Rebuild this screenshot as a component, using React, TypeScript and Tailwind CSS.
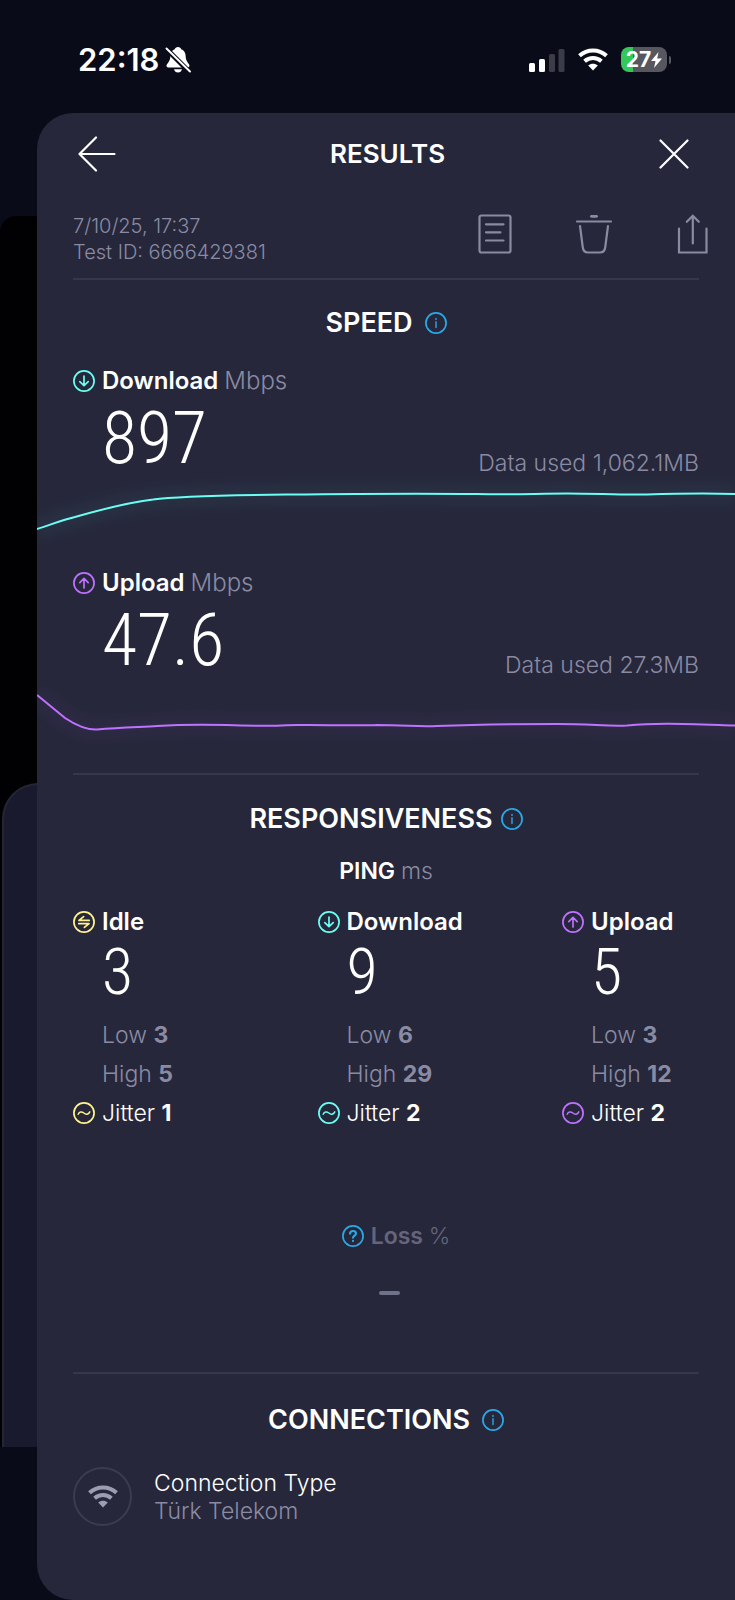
import type { ReactNode } from "react";

const TEAL = "#6afff3";
const PURPLE = "#bf71ff";
const YELLOW = "#fff38e";
const BLUE = "#29a9e6";

type IconKind = "down" | "up" | "idle" | "jitter" | "info" | "question";

const iconPaths: Record<IconKind, ReactNode> = {
    down: <path d="M11 6v9.5M6.8 11.6L11 15.6l4.2-4" strokeWidth="1.7" />,
    up: <path d="M11 16V6.6M6.8 10.6L11 6.4l4.2 4.2" strokeWidth="1.7" />,
    idle: <path d="M16.2 9.4H6L10.6 5.6M5.8 12.7H16L11.4 16.4" strokeWidth="1.7" />,
    jitter: <path d="M5.2 12.2C6.4 9.6 8.6 9.2 10.8 11C13 12.9 15.4 12.6 16.8 9.8" strokeWidth="1.5" />,
    info: <path d="M11 9.8v5.8M11 6.4v1" strokeWidth="1.4" />,
    question: <path d="M8 8.6C8.2 5 14 5.2 14 8.6C14 10.8 11 10.6 11 12.8M11 15.8v.3" strokeWidth="2.100" />,
};

function CircleIcon({ kind, color }: { kind: IconKind; color: string }) {
    return (
        <svg
            viewBox="0 0 22 22"
            className="size-[22px] shrink-0"
            fill="none"
            stroke={color}
            strokeLinecap="round"
            strokeLinejoin="round"
            aria-hidden="true"
        >
            <circle cx="11" cy="11" r="10.1" strokeWidth="1.7" />
            {iconPaths[kind]}
        </svg>
    );
}

function WifiIcon({ className }: { className: string }) {
    return (
        <svg viewBox="0 0 30 23" className={className} fill="none" stroke="currentColor" aria-hidden="true">
            <path d="M1.5 7.8C9.2 .6 20.8 .6 28.5 7.8" strokeWidth="4" />
            <path d="M6.6 13.2C11.5 8.9 18.5 8.9 23.4 13.2" strokeWidth="4" />
            <path d="M10.2 17.6C13 15.2 17 15.2 19.8 17.6L15 22.4Z" fill="currentColor" stroke="none" />
        </svg>
    );
}

function StatusBar() {
    return (
        <div className="flex h-[113px] items-center justify-between pl-[78px] pr-16 pt-1.5 text-white">
            <div className="flex items-center gap-1.5">
                <span className="text-[31px] leading-8 font-semibold">22:18</span>
                <svg viewBox="0 0 26 27" className="h-[27px] w-[26px]" fill="currentColor" aria-hidden="true">
                    <path d="M13 1c1.800 0 2.800 1 3.200 2.200C19.600 4.400 20.600 7.400 20.700 10.500C20.800 14.500 22.500 16 24 18.200C25 20 24.300 21.500 22.500 21.500H3.500C1.700 21.500 .8 20 2 18.200C3.600 16 5.200 14.500 5.300 10.500C5.400 7.400 6.400 4.400 9.800 3.200C10.200 2 11.200 1 13 1Z" />
                    <path d="M9 23.200h8c-.5 2-2 3.300-4 3.300s-3.500-1.300-4-3.300Z" />
                    <path d="M0 1.500L25 26.500" stroke="#090b19" strokeWidth="5" />
                    <path d="M1.500 2.500L25 25.500" stroke="currentColor" strokeWidth="1.900" strokeLinecap="round" />
                </svg>
            </div>
            <div className="flex items-center gap-[13px]">
                <svg viewBox="0 0 36 24" className="h-6 w-9" fill="currentColor" aria-hidden="true">
                    <rect x="0" y="15" width="6" height="9" rx="1.500" />
                    <rect x="10" y="11" width="6" height="13" rx="1.500" />
                    <rect x="20" y="6" width="6" height="18" rx="1.500" fill="#3b3c48" />
                    <rect x="29.500" y="1" width="6" height="23" rx="1.500" fill="#3b3c48" />
                </svg>
                <WifiIcon className="h-[23px] w-[30px]" />
                <div className="flex items-center gap-0.5">
                    <div className="flex h-[25px] w-[46px] items-center justify-center rounded-lg bg-linear-to-r from-[#34c759] from-27% to-[#56575f] to-27%">
                        <span className="text-[21px] leading-6 font-bold">27</span>
                        <svg viewBox="0 0 11 16" className="h-4 w-[11px]" fill="currentColor" aria-hidden="true">
                            <path d="M7.500 0L0 9h4.500L3 16l8-9.500H6.200Z" />
                        </svg>
                    </div>
                    <span className="h-2 w-0.5 rounded-r-full bg-[#56575f]" />
                </div>
            </div>
        </div>
    );
}

function SectionTitle({ children, tight }: { children: string; tight?: boolean }) {
    return (
        <div className={tight ? "flex items-center justify-center gap-2" : "flex items-center justify-center gap-3"}>
            <h2 className="text-[27px] leading-8 font-semibold text-white">{children}</h2>
            <button type="button" aria-label={`About ${children.toLowerCase()}`}>
                <CircleIcon kind="info" color={BLUE} />
            </button>
        </div>
    );
}

function Divider() {
    return <hr className="mx-9 h-0.5 border-0 bg-[#36374b]" />;
}

type SpeedProps = {
    kind: IconKind;
    color: string;
    label: string;
    value: string;
    used: string;
    line: string;
};

function SpeedBlock({ kind, color, label, value, used, line }: SpeedProps) {
    return (
        <div>
            <div className="mx-9">
                <div className="flex items-center gap-[7px] text-2xl leading-7">
                    <CircleIcon kind={kind} color={color} />
                    <span className="font-semibold text-white">
                        {label} <span className="font-light text-[#8a8ba3]">Mbps</span>
                    </span>
                </div>
                <div className="flex items-end justify-between pl-[29px]">
                    <span className="pt-1 font-['Roboto_Condensed','Liberation_Sans_Narrow',Roboto,sans-serif] text-[72px] leading-[80px] font-light text-white">
                        {value}
                    </span>
                    <span className="pb-0.5 text-[23px] leading-7 font-light text-[#8a8ba3]">Data used {used}</span>
                </div>
            </div>
            <svg
                viewBox="0 0 698 90"
                preserveAspectRatio="none"
                className="h-[90px] w-full overflow-visible"
                fill="none"
                stroke={color}
                aria-hidden="true"
            >
                <path d={line} strokeWidth="22" opacity="0.04" className="blur-[6px]" />
                <path d={line} strokeWidth="2" />
            </svg>
        </div>
    );
}

const pings = [
    { kind: "idle" as IconKind, color: YELLOW, label: "Idle", value: 3, low: 3, high: 5, jitter: 1 },
    { kind: "down" as IconKind, color: TEAL, label: "Download", value: 9, low: 6, high: 29, jitter: 2 },
    { kind: "up" as IconKind, color: PURPLE, label: "Upload", value: 5, low: 3, high: 12, jitter: 2 },
];

export default function App() {
    return (
        <div className="flex min-h-screen flex-col bg-[#090b19] font-[Inter,'Liberation_Sans',sans-serif]">
            <StatusBar />
            <div className="flex flex-1">
                {/* Screen that stays visible behind the sheet */}
                <div className="-mr-9 flex w-[73px] shrink-0 flex-col pt-[103px] pb-[153px]">
                    <div className="flex flex-1 flex-col rounded-tl-2xl bg-[#010104] pt-[567px] pl-0.5">
                        <div className="flex-1 rounded-tl-[36px] border-t-2 border-l-2 border-[#252538] bg-[#1a1a2e]" />
                    </div>
                </div>

                <main className="relative min-w-0 flex-1 overflow-hidden rounded-l-[36px] bg-[#26273b]">
                    <header className="flex h-[82px] items-center justify-between pr-[46px] pl-[41px]">
                        <button type="button" aria-label="Back" className="text-white">
                            <svg viewBox="0 0 38 36" className="h-9 w-[38px]" fill="none" stroke="currentColor" strokeWidth="2.200" strokeLinecap="round" strokeLinejoin="round">
                                <path d="M36.500 18H1.500M18 1.500L1.500 18L18 34.500" />
                            </svg>
                        </button>
                        <h1 className="text-[26px] leading-8 font-semibold text-white">RESULTS</h1>
                        <button type="button" aria-label="Close" className="text-white">
                            <svg viewBox="0 0 30 30" className="size-[30px]" fill="none" stroke="currentColor" strokeWidth="2.200" strokeLinecap="round">
                                <path d="M1.500 1.500L28.500 28.500M28.500 1.500L1.500 28.500" />
                            </svg>
                        </button>
                    </header>

                    <div className="flex items-center justify-between pt-[18px] pr-[22px] pb-[13px] pl-9 text-[#8a8ba3]">
                        <div className="text-xl leading-[26px] font-light">
                            <p>7/10/25, 17:37</p>
                            <p>Test ID: 6666429381</p>
                        </div>
                        <div className="flex gap-[59px] pb-2.5">
                            <button type="button" aria-label="Details">
                                <svg viewBox="0 0 40 40" className="size-10" fill="none" stroke="currentColor" strokeWidth="2.200" strokeLinecap="round">
                                    <rect x="4.500" y="1.500" width="31" height="37" rx="2" />
                                    <path d="M11 10.300H28.500M11 18.300H25.500M11 26.500H28.500" />
                                </svg>
                            </button>
                            <button type="button" aria-label="Delete">
                                <svg viewBox="0 0 40 40" className="size-10" fill="none" stroke="currentColor" strokeWidth="2.200" strokeLinecap="round" strokeLinejoin="round">
                                    <path d="M3 7.500H37" />
                                    <path d="M17.500 2.300H22.500" strokeWidth="2.800" />
                                    <path d="M6 12L8.800 33.500C9.200 36.800 10.800 38.500 14 38.500H26C29.200 38.500 30.800 36.800 31.200 33.500L34 12" />
                                </svg>
                            </button>
                            <button type="button" aria-label="Share">
                                <svg viewBox="0 0 40 40" className="size-10" fill="none" stroke="currentColor" strokeWidth="2.200" strokeLinecap="round">
                                    <path d="M6 14.500V38.500H33.500V14.500" />
                                    <path d="M19.800 29.500V2M13.800 7.800L19.800 1.800L25.800 7.800" />
                                </svg>
                            </button>
                        </div>
                    </div>

                    <Divider />

                    <section className="pt-[27px] pb-0.5">
                        <SectionTitle>SPEED</SectionTitle>
                        <div className="pt-7">
                            <SpeedBlock
                                kind="down"
                                color={TEAL}
                                label="Download"
                                value="897"
                                used="1,062.1MB"
                                line="M0 50C13 46 25 41 38 38C66 30 95 23 116 20.500C140 17 200 16 250 15.500C340 14.500 400 14.500 440 15C475 16 500 14.500 530 14.500C560 14.500 580 16 610 15.500C640 14.500 670 14 698 15"
                            />
                            <SpeedBlock
                                kind="up"
                                color={PURPLE}
                                label="Upload"
                                value="47.6"
                                used="27.3MB"
                                line="M0 14L28 37C40 45 50 49 60 48.500C85 46.500 105 46 120 45C150 43 170 43.500 190 44C215 45.500 235 45 260 44C290 43.500 320 45 340 44C370 44 380 46 400 45C440 43.500 490 43 520 43C555 43 570 45.500 590 44.500C620 41.500 650 43 698 44.500"
                            />
                        </div>
                    </section>

                    <Divider />

                    <section className="pt-7">
                        <SectionTitle tight>RESPONSIVENESS</SectionTitle>
                        <p className="mt-[22px] text-center text-[23px] leading-7 font-semibold text-white">
                            PING <span className="font-light text-[#8a8ba3]">ms</span>
                        </p>
                        <div className="mx-9 mt-[23px] grid grid-cols-[1fr_1fr_137px] text-[23px] leading-7">
                            {pings.map((ping) => (
                                <div key={ping.label}>
                                    <div className="flex items-center gap-[7px] text-2xl leading-7">
                                        <CircleIcon kind={ping.kind} color={ping.color} />
                                        <span className="font-semibold text-white">{ping.label}</span>
                                    </div>
                                    <div className="flex flex-col gap-[11px] pl-[29px] font-light text-[#8a8ba3]">
                                        <p className="font-['Roboto_Condensed','Liberation_Sans_Narrow',Roboto,sans-serif] text-[64px] leading-[74px] text-white">
                                            {ping.value}
                                        </p>
                                        <p>
                                            Low <b className="font-bold">{ping.low}</b>
                                        </p>
                                        <p>
                                            High <b className="font-bold">{ping.high}</b>
                                        </p>
                                    </div>
                                    <div className="mt-[11px] flex items-center gap-[7px] font-light text-white">
                                        <CircleIcon kind="jitter" color={ping.color} />
                                        <span>
                                            Jitter <b className="font-bold">{ping.jitter}</b>
                                        </span>
                                    </div>
                                </div>
                            ))}
                        </div>
                        <div className="mt-[95px] flex items-center justify-center gap-[7px] pl-5 text-[23px] leading-7 text-[#64657b]">
                            <CircleIcon kind="question" color={BLUE} />
                            <span className="font-semibold">
                                Loss <span className="font-light">%</span>
                            </span>
                        </div>
                        <div className="flex justify-center pt-[41px] pb-[77px] pl-1.5">
                            <span className="h-1 w-[21px] rounded-xs bg-[#70718a]" />
                        </div>
                    </section>

                    <Divider />

                    <section className="pt-[30px] pb-[74px]">
                        <SectionTitle>CONNECTIONS</SectionTitle>
                        <div className="mx-9 mt-[31px] flex items-center gap-[22px] text-[23px] leading-7 font-light">
                            <div className="flex size-[59px] shrink-0 items-center justify-center rounded-full border-2 border-[#3c3c50] text-[#9c9db3]">
                                <WifiIcon className="h-[23px] w-[30px]" />
                            </div>
                            <div>
                                <p className="text-white">Connection Type</p>
                                <p className="text-[#8a8ba3]">Türk Telekom</p>
                            </div>
                        </div>
                    </section>
                </main>
            </div>
        </div>
    );
}
